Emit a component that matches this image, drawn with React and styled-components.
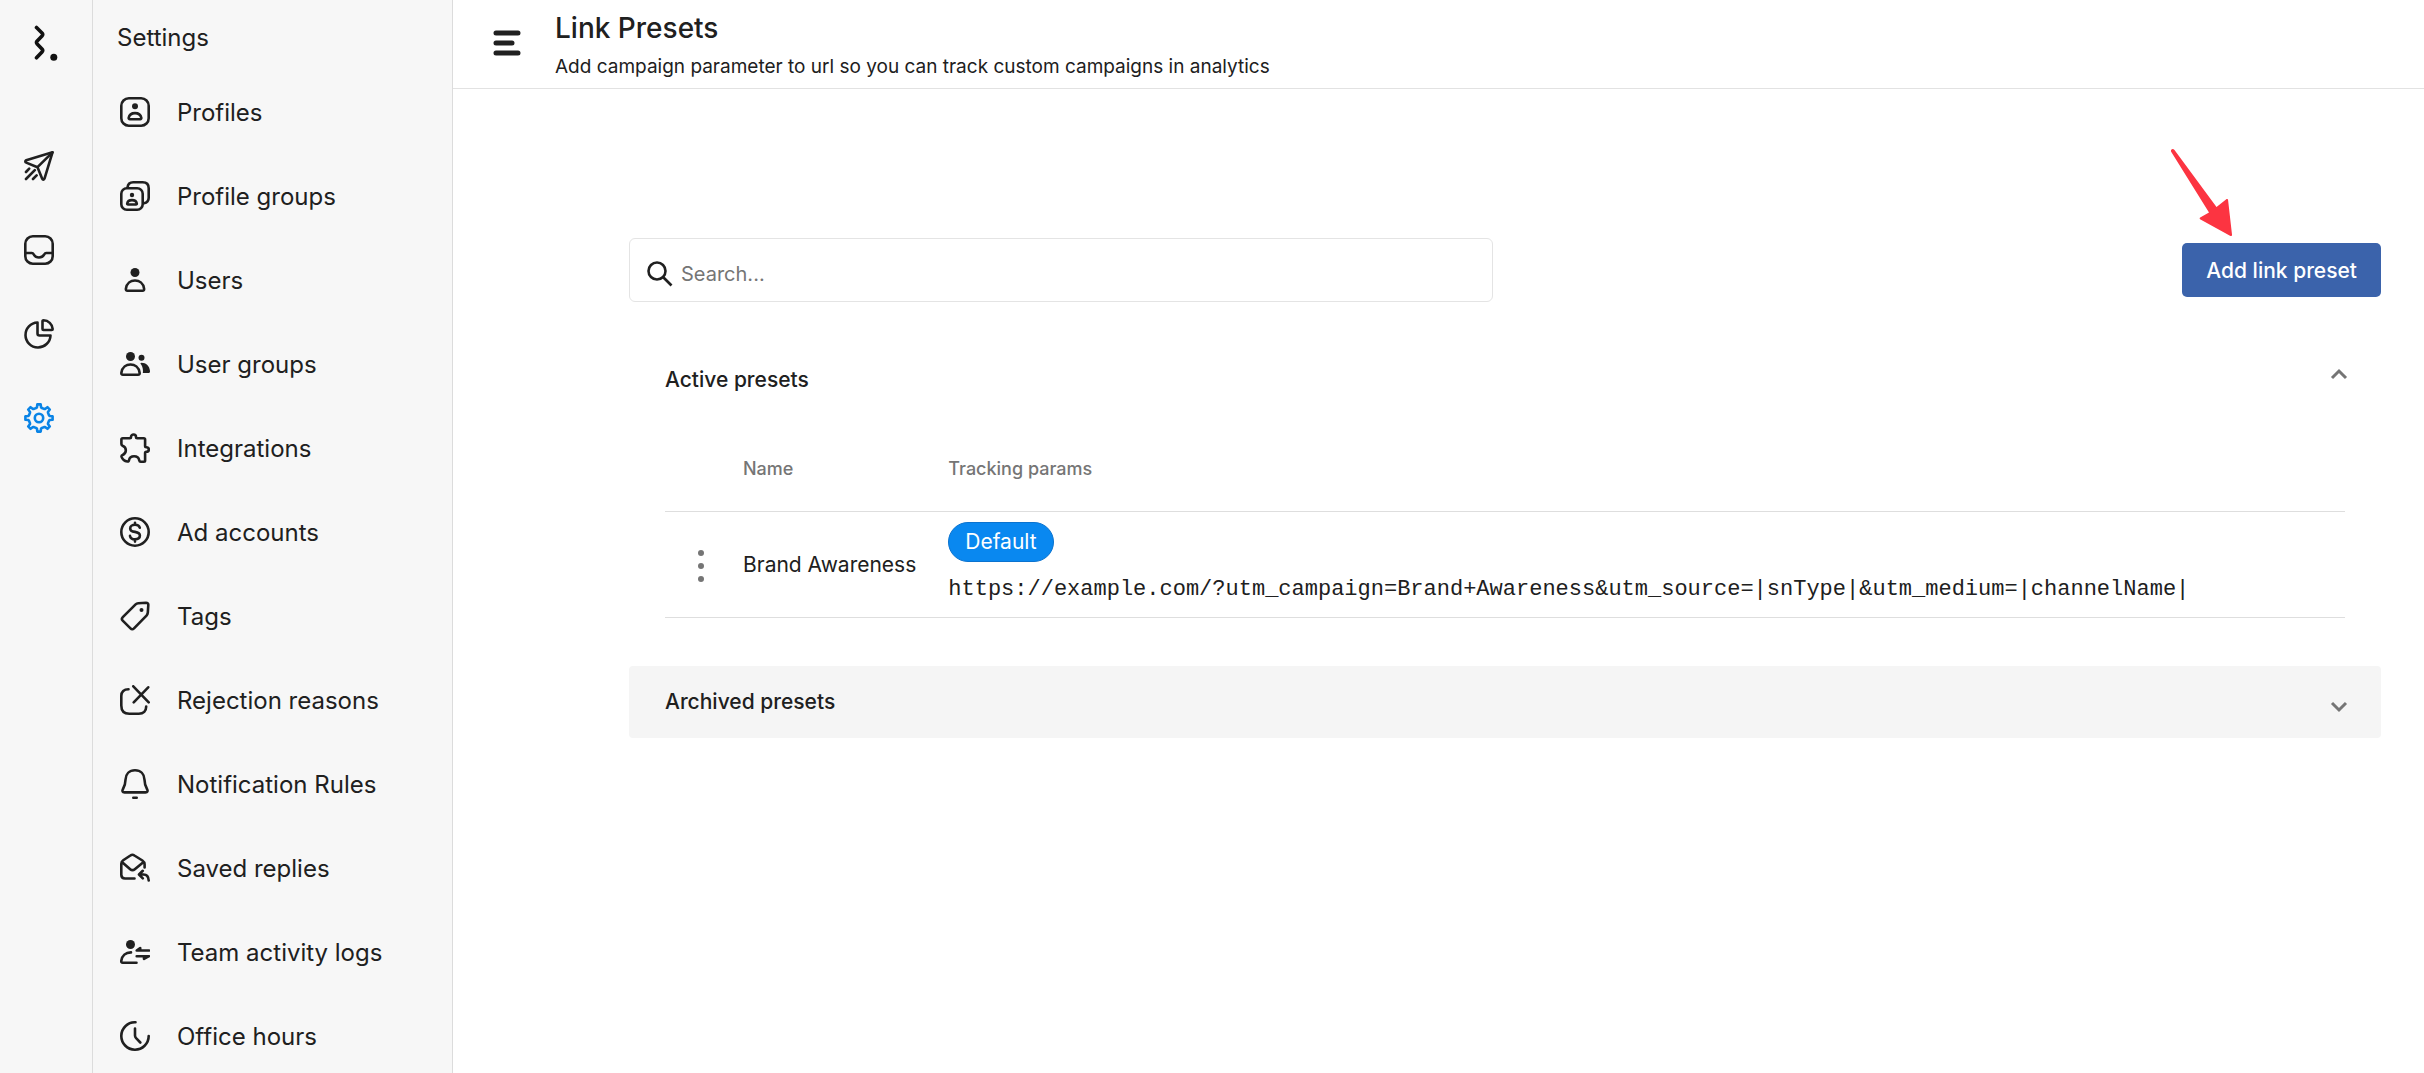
import { useState } from "react";
import styled, { createGlobalStyle } from "styled-components";

const GlobalStyle = createGlobalStyle`
  * {
    box-sizing: border-box;
  }
  body {
    margin: 0;
    background: #fff;
    color: #202020;
    font-family: Inter, "Liberation Sans", sans-serif;
    font-size: 22px;
  }
  button, input {
    font-family: inherit;
    color: inherit;
  }
`;

const Icon = ({ children }) => (
  <Svg viewBox="0 0 30 30" aria-hidden="true">
    {children}
  </Svg>
);

// eight teeth around the centre of a 30px box
const gearPoints = Array.from({ length: 8 }, (_, i) =>
  [
    [-16, 10.4],
    [-11, 10.8],
    [-7, 13.7],
    [7, 13.7],
    [11, 10.8],
    [16, 10.4],
  ]
    .map(([offset, r]) => {
      const a = ((i * 45 + offset) * Math.PI) / 180;
      return `${(15 + r * Math.sin(a)).toFixed(2)},${(15 - r * Math.cos(a)).toFixed(2)}`;
    })
    .join(" ")
).join(" ");

const icons = {
  send: (
    <Icon>
      <path d="M28.5 1.3 2.2 9.3c-1.2.5-1.2 1.9 0 2.3l11.3 4.6 4.7 11.6c.5 1.1 1.9 1.1 2.3-.1z" />
      <path d="M28.5 1.3 13.5 16.2M2 21l3.2-3.4M2 28l8.800-8.800M9 28l3.600-3.600" />
    </Icon>
  ),
  inbox: (
    <Icon>
      <rect x="1.3" y="1.3" width="27.4" height="27.4" rx="7.5" />
      <path d="M1.5 18h6.3c1.2 0 1.6.8 2.2 1.8 2.2 3.5 7.8 3.5 10 0 .6-1 1-1.8 2.2-1.8h6.3" />
    </Icon>
  ),
  pie: (
    <Icon>
      <path d="M13.5 3.5a12.5 12.5 0 1 0 13 13h-11c-1.2 0-2-.8-2-2z" />
      <path d="M18.5 2.2c0-.6.4-.9 1-.9a9.4 9.4 0 0 1 9.2 8.7c0 .7-.4 1-1 1h-8.2c-.6 0-1-.4-1-1z" />
    </Icon>
  ),
  gear: (
    <Icon>
      <polygon points={gearPoints} />
      <circle cx="15" cy="15" r="4.2" />
    </Icon>
  ),
  profile: (
    <Icon>
      <rect x="1.3" y="1.3" width="27.4" height="27.4" rx="7.5" />
      <circle cx="15" cy="9.3" r="3" fill="currentColor" stroke="none" />
      <path d="M9.800 22.200h10.400c.8 0 1.200-.6 1.100-1.400-1.200-6.200-11.400-6.200-12.600 0-.1.800.3 1.400 1.100 1.400z" />
    </Icon>
  ),
  profiles: (
    <Icon>
      <rect x="1.3" y="7.3" width="21.4" height="21.4" rx="5.5" />
      <path d="M7.500 6.500c.4-3.200 2.500-5.200 5.700-5.200h9.500c3.700 0 6 2.300 6 6v9.500c0 3.200-1.800 5-4.700 5.500" />
      <circle cx="12" cy="14" r="2.2" fill="currentColor" stroke="none" />
      <path d="M8 23.500h8c.6 0 .9-.4.800-1-.9-4.500-8.700-4.500-9.600 0-.1.600.2 1 .8 1z" />
    </Icon>
  ),
  user: (
    <Icon>
      <circle cx="15" cy="7.5" r="4.5" fill="currentColor" stroke="none" />
      <path d="M7.500 25.700h15c1.300 0 1.800-.7 1.600-2-1.500-11-16.700-11-18.200 0-.2 1.300.3 2 1.600 2z" />
    </Icon>
  ),
  users: (
    <Icon>
      <circle cx="10.5" cy="7.5" r="4.5" fill="currentColor" stroke="none" />
      <circle cx="21.5" cy="8.8" r="3" fill="currentColor" stroke="none" />
      <path d="M3 25.700h15c1.300 0 1.800-.7 1.600-2-1.500-11-16.700-11-18.200 0-.2 1.300.3 2 1.600 2z" />
      <path
        d="M21.300 13.800c5 0 8.200 3.200 8.700 8.200.1 1.300-.6 2-1.800 2h-5.400c.6-3.700-.4-6.900-2.500-9.400z"
        fill="currentColor"
        stroke="none"
      />
    </Icon>
  ),
  puzzle: (
    <Icon>
      <path d="M2.700 5.200h7.100c.8 0 1.200-.5 1.200-1.200 0-3.300 5-3.300 5 0 0 .7.400 1.200 1.200 1.200h6.600c.9 0 1.300.4 1.300 1.300V13c0 .8.400 1.200 1.200 1.200 3.300 0 3.300 4.600 0 4.600-.8 0-1.200.4-1.200 1.200v7.500c0 .8-.4 1.200-1.200 1.200h-3.200c-1 0-1.300-.5-1.500-1.500-1-5.200-9.200-5.200-10.200 0-.2 1-.6 1.500-1.600 1.300-3-.5-5-2.300-5.800-4.700-.3-1 .2-1.500 1-1.800 4.300-1.800 4.300-7.600 0-9.300-.9-.4-1.200-.8-1.200-1.600V6.500c0-.9.400-1.300 1.300-1.300z" />
    </Icon>
  ),
  dollar: (
    <Icon>
      <circle cx="15" cy="15" r="13.7" />
      <path d="M19.800 10.800c-.5-2-2.300-3-4.800-3-2.700 0-4.800 1.400-4.800 3.600 0 2.300 2.100 3.100 4.800 3.500 2.900.5 4.900 1.300 4.900 3.700 0 2.300-2.100 3.700-4.900 3.700-2.700 0-4.600-1.300-5-3.400M15 5.700v2M15 22.400v2.200" />
    </Icon>
  ),
  tag: (
    <Icon>
      <path d="M18.300 2.200 26 1.800c1.700 0 2.400.7 2.300 2.300l-.5 7.600c-.1 1.200-.5 2-1.300 2.900L14 27.300c-1.200 1.200-2.400 1.200-3.500.1l-7.800-7.800c-1.100-1.100-1.100-2.300.1-3.500L15.600 3.400c.8-.8 1.600-1.100 2.700-1.200z" />
      <circle cx="21.5" cy="9" r="2" fill="currentColor" stroke="none" />
    </Icon>
  ),
  reject: (
    <Icon>
      <path d="M8.500 4.300C4 4.300 1.300 6.500 1.300 11v9.500c0 5 2.700 8.200 8 8.200h9.500c4.700 0 7.400-2.700 7.400-7.200M13.300 1.300l15.400 16M28.200 2.300 13.700 17.300" />
    </Icon>
  ),
  bell: (
    <Icon>
      <path d="M15 1.300c5.700 0 9.300 3.900 9.500 9.400.1 4.300.8 6.500 2.500 9.300 1.200 2 .5 3.400-1.500 3.400h-21c-2 0-2.700-1.400-1.500-3.400 1.700-2.800 2.400-5 2.500-9.300C5.700 5.200 9.300 1.300 15 1.300zM13.300 28.700h3.400" />
    </Icon>
  ),
  mail: (
    <Icon>
      <path d="M14.500 25.500H5c-2.200 0-3.700-1.500-3.700-3.700V10.700c0-1.500.6-2.500 1.900-3.400l7.200-4.800c1.400-1 2.600-1 4 0l8 5c1.500 1 2.200 2.100 2.200 3.800v3.200M2.200 9.200l8 7c1.600 1.400 3 1.400 4.600 0l8.500-7" />
      <path d="M22.800 17.800 19 21.500l3.800 3.800M19.500 21.500h4c3 0 5 2 5.200 6" />
    </Icon>
  ),
  activity: (
    <Icon>
      <circle cx="10.5" cy="7.5" r="4.5" fill="currentColor" stroke="none" />
      <path d="M16.500 25.700H2.800c-1.200 0-1.700-.7-1.500-2C2 18.800 5.500 15.400 11 15.400" />
      <path d="M29 13.500H16.700l3.500-2.500v2.500M16.700 19.200H29l-5 2.600v-2.600" fill="currentColor" />
    </Icon>
  ),
  clock: (
    <Icon>
      <path d="M15.500 1.300A13.700 13.700 0 1 0 28.700 15M15 7.500v7c0 1 .3 1.800 1.100 2.700l4.200 4.300" />
    </Icon>
  ),
};

const sections = [
  { icon: "send", label: "Publish" },
  { icon: "inbox", label: "Inbox" },
  { icon: "pie", label: "Analytics" },
  { icon: "gear", label: "Settings", active: true },
];

const links = [
  { icon: "profile", label: "Profiles" },
  { icon: "profiles", label: "Profile groups" },
  { icon: "user", label: "Users" },
  { icon: "users", label: "User groups" },
  { icon: "puzzle", label: "Integrations" },
  { icon: "dollar", label: "Ad accounts" },
  { icon: "tag", label: "Tags" },
  { icon: "reject", label: "Rejection reasons" },
  { icon: "bell", label: "Notification Rules" },
  { icon: "mail", label: "Saved replies" },
  { icon: "activity", label: "Team activity logs" },
  { icon: "clock", label: "Office hours" },
];

const presets = [
  {
    name: "Brand Awareness",
    isDefault: true,
    params:
      "https://example.com/?utm_campaign=Brand+Awareness&utm_source=|snType|&utm_medium=|channelName|",
  },
];

function App() {
  const [search, setSearch] = useState("");
  const [activeOpen, setActiveOpen] = useState(true);
  const [archivedOpen, setArchivedOpen] = useState(false);

  return (
    <Wrapper>
      <GlobalStyle />
      <Rail>
        <LogoLink href="#" aria-label="Home">
          <Logo viewBox="0 0 24 36" aria-hidden="true">
            <path d="M2.500 2.500 8 8c1 1.100 1 1.900 0 3l-4.800 5c-1 1.100-1 1.900 0 3L8 24c1 1.100 1 1.900 0 3l-5.500 5.800" />
            <circle cx="19.800" cy="32.300" r="3.500" />
          </Logo>
        </LogoLink>
        {sections.map((s) => (
          <RailLink key={s.label} href="#" aria-label={s.label} $active={s.active}>
            {icons[s.icon]}
          </RailLink>
        ))}
      </Rail>
      <Sidebar>
        <SidebarTitle>Settings</SidebarTitle>
        {links.map((l) => (
          <SidebarLink key={l.label} href="#">
            {icons[l.icon]}
            {l.label}
          </SidebarLink>
        ))}
      </Sidebar>
      <Main>
        <Header>
          <MenuButton type="button" aria-label="Toggle menu">
            <MenuIcon viewBox="0 0 28 28" aria-hidden="true">
              <path d="M3 4h22M3 14h16M3 24h22" />
            </MenuIcon>
          </MenuButton>
          <div>
            <Title>Link Presets</Title>
            <Subtitle>
              Add campaign parameter to url so you can track custom campaigns in analytics
            </Subtitle>
          </div>
        </Header>
        <Content>
          <Toolbar>
            <SearchBox>
              <SearchIcon viewBox="0 0 26 26" aria-hidden="true">
                <circle cx="10" cy="10" r="8.5" />
                <path d="m16.500 16.500 8 8" />
              </SearchIcon>
              <SearchInput
                type="text"
                placeholder="Search..."
                aria-label="Search presets"
                value={search}
                onChange={(e) => setSearch(e.target.value)}
              />
            </SearchBox>
            <AddWrap>
              <AddButton type="button">Add link preset</AddButton>
              <Arrow viewBox="0 0 68 92" aria-hidden="true">
                <path d="M3 5.500C2.500 3 5 2 6.500 4L48.500 61l9.500-7.500c1-.8 2-.5 2.100.8L64 88.500c.1 1.500-.8 2-2 1.300L32.500 73.500c-1.200-.7-1.100-1.700.1-2.200L41 66.500z" />
              </Arrow>
            </AddWrap>
          </Toolbar>

          <PanelHead type="button" aria-expanded={activeOpen} onClick={() => setActiveOpen(!activeOpen)}>
            Active presets
            <Chevron $up={activeOpen} viewBox="0 0 18 12" aria-hidden="true">
              <path d="m2 2 7 7 7-7" />
            </Chevron>
          </PanelHead>
          {activeOpen && (
            <PanelBody>
              <Table>
                <thead>
                  <tr>
                    <HeadCell $narrow aria-label="Actions" />
                    <HeadCell>Name</HeadCell>
                    <HeadCell $grow>Tracking params</HeadCell>
                  </tr>
                </thead>
                <tbody>
                  {presets.map((p) => (
                    <tr key={p.name}>
                      <Cell>
                        <MoreButton type="button" aria-label={`Actions for ${p.name}`}>
                          <Dots viewBox="0 0 6 32" aria-hidden="true">
                            <circle cx="3" cy="3" r="3" />
                            <circle cx="3" cy="16" r="3" />
                            <circle cx="3" cy="29" r="3" />
                          </Dots>
                        </MoreButton>
                      </Cell>
                      <Cell>{p.name}</Cell>
                      <Cell>
                        {p.isDefault && <Badge>Default</Badge>}
                        <Url>{p.params}</Url>
                      </Cell>
                    </tr>
                  ))}
                </tbody>
              </Table>
            </PanelBody>
          )}
          <PanelHead
            type="button"
            $closed={!archivedOpen}
            aria-expanded={archivedOpen}
            onClick={() => setArchivedOpen(!archivedOpen)}
          >
            Archived presets
            <Chevron $up={archivedOpen} viewBox="0 0 18 12" aria-hidden="true">
              <path d="m2 2 7 7 7-7" />
            </Chevron>
          </PanelHead>
        </Content>
      </Main>
    </Wrapper>
  );
}

const Wrapper = styled.div`
  display: flex;
  height: 100vh;
  overflow: hidden;
`;

const Svg = styled.svg`
  width: 30px;
  height: 30px;
  flex-shrink: 0;
  fill: none;
  stroke: currentColor;
  stroke-width: 2.6;
  stroke-linecap: round;
  stroke-linejoin: round;
`;

const Rail = styled.nav`
  flex: 0 0 93px;
  display: flex;
  flex-direction: column;
  background: #f7f7f7;
  border-right: 1px solid #dcdcdc;
`;

const LogoLink = styled.a`
  height: 124px;
  flex-shrink: 0;
  padding: 25px 0 0 34px;
  color: #111;
`;

const Logo = styled.svg`
  display: block;
  width: 24px;
  height: 36px;
  fill: none;
  stroke: currentColor;
  stroke-width: 3.6;
  stroke-linecap: round;
  stroke-linejoin: round;

  circle {
    fill: currentColor;
    stroke: none;
  }
`;

const RailLink = styled.a`
  height: 84px;
  flex-shrink: 0;
  display: flex;
  align-items: center;
  padding-left: 24px;
  color: ${(p) => (p.$active ? "#0a84e6" : "#202020")};
`;

const Sidebar = styled.nav`
  flex: 0 0 360px;
  overflow: hidden;
  background: #f7f7f7;
  border-right: 1px solid #dcdcdc;
`;

const SidebarTitle = styled.h2`
  margin: 0;
  height: 70px;
  padding: 22px 24px 0;
  font-size: 24px;
  line-height: 32px;
  font-weight: 400;
`;

const SidebarLink = styled.a`
  height: 84px;
  display: flex;
  align-items: center;
  gap: 27px;
  padding: 0 27px;
  font-size: 24px;
  color: inherit;
  text-decoration: none;
`;

const Main = styled.main`
  flex: 1;
  min-width: 0;
  overflow: auto;
`;

const Header = styled.header`
  display: flex;
  align-items: flex-start;
  gap: 34px;
  height: 89px;
  padding: 10px 40px 0;
  border-bottom: 1px solid #e2e2e2;
`;

const MenuButton = styled.button`
  margin-top: 19px;
  padding: 0;
  border: 0;
  background: none;
  cursor: pointer;
`;

const MenuIcon = styled.svg`
  display: block;
  width: 28px;
  height: 28px;
  stroke: currentColor;
  stroke-width: 5;
  stroke-linecap: round;
`;

const Title = styled.h1`
  margin: 0;
  font-size: 28px;
  line-height: 36px;
  font-weight: 500;
`;

const Subtitle = styled.p`
  margin: 9px 0 0;
  font-size: 19px;
  line-height: 24px;
`;

const Content = styled.div`
  padding: 149px 43px 40px 176px;
`;

const Toolbar = styled.div`
  display: flex;
  align-items: center;
  justify-content: space-between;
  margin-bottom: 41px;
`;

const SearchBox = styled.label`
  display: flex;
  align-items: center;
  width: 49.3%;
  height: 64px;
  padding: 8px 17px 0;
  gap: 8px;
  border: 1px solid #e4e4e4;
  border-radius: 6px;
`;

const SearchIcon = styled.svg`
  width: 26px;
  height: 26px;
  flex-shrink: 0;
  fill: none;
  stroke: currentColor;
  stroke-width: 2.6;
`;

const SearchInput = styled.input`
  flex: 1;
  min-width: 0;
  padding: 0;
  border: 0;
  outline: 0;
  background: none;
  font-size: 20px;

  &::placeholder {
    color: #757575;
    opacity: 1;
  }
`;

const AddWrap = styled.div`
  position: relative;
`;

const AddButton = styled.button`
  height: 54px;
  padding: 0 24px;
  border: 0;
  border-radius: 5px;
  background: #3b63ab;
  color: #fff;
  font-size: 21px;
  font-weight: 500;
  cursor: pointer;
`;

const Arrow = styled.svg`
  position: absolute;
  left: -14px;
  top: -97px;
  width: 68px;
  height: 92px;
  fill: #fc3441;
  pointer-events: none;
`;

const PanelHead = styled.button`
  display: flex;
  align-items: center;
  justify-content: space-between;
  width: 100%;
  height: 72px;
  padding: 0 33px 0 36px;
  border: 0;
  border-radius: 4px;
  background: ${(p) => (p.$closed ? "#f5f5f5" : "#fff")};
  font-size: 21px;
  font-weight: 500;
  text-align: left;
  cursor: pointer;
`;

const Chevron = styled.svg`
  width: 18px;
  height: 12px;
  margin-top: ${(p) => (p.$up ? "-10px" : "10px")};
  transform: ${(p) => (p.$up ? "rotate(180deg)" : "none")};
  fill: none;
  stroke: #757575;
  stroke-width: 3;
`;

const PanelBody = styled.div`
  padding: 0 36px 48px;
`;

const Table = styled.table`
  width: 100%;
  border-collapse: collapse;
  text-align: left;
`;

const HeadCell = styled.th`
  height: 96px;
  padding: 12px 32px 0 0;
  width: ${(p) => (p.$narrow ? "78px" : p.$grow ? "100%" : "auto")};
  min-width: ${(p) => (p.$narrow ? "78px" : "0")};
  border-bottom: 1px solid #dedede;
  color: #757575;
  font-size: 18px;
  font-weight: 500;
  white-space: nowrap;
`;

const Cell = styled.td`
  height: 106px;
  padding: 0 32px 0 0;
  border-bottom: 1px solid #dedede;
  font-size: 21px;
  white-space: nowrap;
`;

const MoreButton = styled.button`
  display: block;
  padding: 4px 7px 0 33px;
  border: 0;
  background: none;
  cursor: pointer;
`;

const Dots = styled.svg`
  display: block;
  width: 6px;
  height: 32px;
  fill: #757575;
`;

const Badge = styled.span`
  display: inline-block;
  padding: 0 16px;
  border: 1px solid #0b73cf;
  border-radius: 20px;
  background: #0988f0;
  color: #fff;
  font-size: 21px;
  line-height: 38px;
`;

const Url = styled.div`
  margin-top: 12px;
  font-family: "Liberation Mono", monospace;
  font-size: 22px;
  line-height: 32px;
`;

export default App;
